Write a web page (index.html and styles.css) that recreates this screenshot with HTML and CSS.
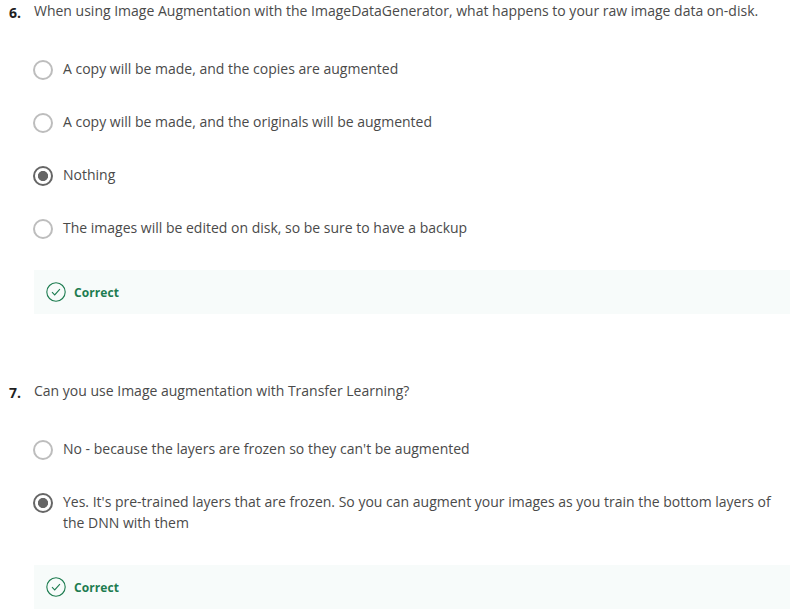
FILE: index.html
```html
<!DOCTYPE html>
<html lang="en">
<head>
<meta charset="utf-8">
<title>Quiz</title>
<link rel="stylesheet" href="styles.css">
</head>
<body>
<main>
<section class="question">
  <div class="number">6.</div>
  <div class="body">
    <p class="prompt">When using Image Augmentation with the ImageDataGenerator, what happens to your raw image data on-disk.</p>
    <div class="options">
      <div class="option"><span class="radio"></span><span class="label">A copy will be made, and the copies are augmented</span></div>
      <div class="option"><span class="radio"></span><span class="label">A copy will be made, and the originals will be augmented</span></div>
      <div class="option"><span class="radio checked"></span><span class="label">Nothing</span></div>
      <div class="option"><span class="radio"></span><span class="label">The images will be edited on disk, so be sure to have a backup</span></div>
    </div>
    <div class="feedback"><svg class="tick" viewBox="0 0 20 20"><circle cx="10" cy="10" r="9.2"/><path d="M6 10.2l2.7 2.7 5.2-5.8"/></svg><span>Correct</span></div>
  </div>
</section>
<section class="question">
  <div class="number">7.</div>
  <div class="body">
    <p class="prompt">Can you use Image augmentation with Transfer Learning?</p>
    <div class="options">
      <div class="option"><span class="radio"></span><span class="label">No - because the layers are frozen so they can't be augmented</span></div>
      <div class="option"><span class="radio checked"></span><span class="label">Yes. It's pre-trained layers that are frozen. So you can augment your images as you train the bottom layers of the DNN with them</span></div>
    </div>
    <div class="feedback"><svg class="tick" viewBox="0 0 20 20"><circle cx="10" cy="10" r="9.2"/><path d="M6 10.2l2.7 2.7 5.2-5.8"/></svg><span>Correct</span></div>
  </div>
</section>
</main>
</body>
</html>
```
FILE: styles.css
```css
* { box-sizing: border-box; }
body {
  margin: 0;
  background: #fff;
  color: #4a4a4a;
  font: 14px/21px "Open Sans", sans-serif;
}
.question {
  display: flex;
  padding: 0 11px 0 9px;
}
.question + .question { margin-top: 66px; }
.number {
  width: 25px;
  flex: none;
  padding-top: 2px;
  font-weight: 700;
  color: #1f1f1f;
}
.body { flex: 1; }
.prompt { margin: 0; white-space: nowrap; }
.options {
  display: grid;
  gap: 32px;
  margin-top: 37px;
}
.option { display: flex; gap: 10px; margin-left: -1px; }
.radio {
  flex: none;
  width: 20px;
  height: 20px;
  margin: 2px 0 -1px;
  border: 2px solid #bdbdbd;
  border-radius: 50%;
}
.checked {
  border-color: #666;
  background: radial-gradient(circle, #666 4.7px, #fff 5.4px);
}
.feedback {
  display: flex;
  align-items: center;
  gap: 8px;
  height: 44px;
  margin-top: 32px;
  padding-left: 12px;
  background: #f7fbfa;
  color: #1d7c50;
  font-size: 12px;
  font-weight: 700;
  letter-spacing: 0.1px;
}
.tick {
  width: 20px;
  height: 20px;
  fill: none;
  stroke: #1d7c50;
  stroke-width: 1.1;
}
```
